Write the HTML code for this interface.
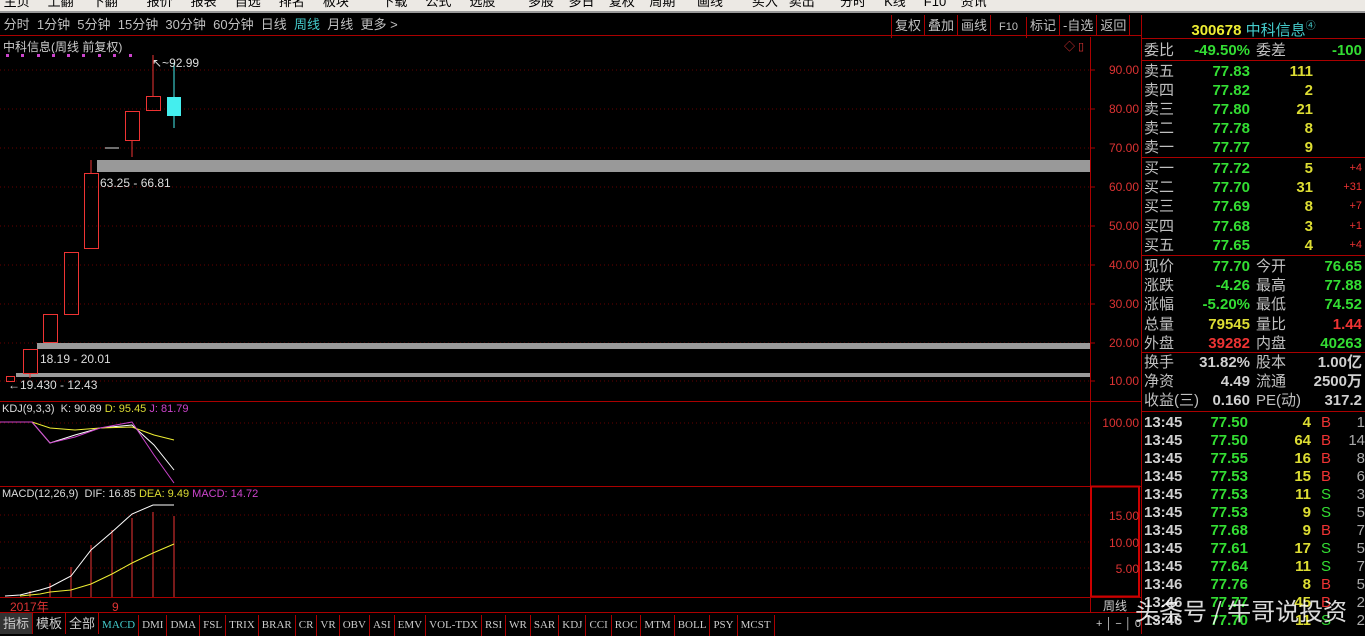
<!DOCTYPE html>
<html><head><meta charset="utf-8"><style>
*{margin:0;padding:0;box-sizing:border-box}
body{width:1365px;height:634px;background:#000;overflow:hidden;position:relative;font-family:"Liberation Sans","Noto Sans CJK SC",sans-serif;color:#c0c0c0}
.a{position:absolute;white-space:nowrap}
.r{position:absolute;white-space:nowrap;text-align:right}
.rp{position:absolute;left:0;top:0;width:1365px;height:634px;font-size:15px;font-weight:bold;line-height:19px}
.lb{font-weight:normal;color:#c0c0c0}
.g{color:#33dd33}.y{color:#dddd33}.rd{color:#ee3333}.w{color:#d0d0d0}
.tabs span{display:inline-block;border-right:1px solid #a00;padding:0 3px;height:21px;line-height:21px}
</style></head><body>
<div class="a" style="left:0;top:0;width:1365px;height:13px;background:#ece9e4;border-bottom:2px solid #999;font-size:13px;color:#000;line-height:4px;overflow:hidden">&nbsp;主页 &nbsp;&nbsp;&nbsp;&nbsp;上翻&nbsp;&nbsp;&nbsp;&nbsp;&nbsp;下翻&nbsp;&nbsp;&nbsp;&nbsp;&nbsp;&nbsp;&nbsp; 报价&nbsp;&nbsp;&nbsp;&nbsp; 报表&nbsp;&nbsp;&nbsp;&nbsp; 自选&nbsp;&nbsp;&nbsp;&nbsp; 排名&nbsp;&nbsp;&nbsp;&nbsp; 板块&nbsp;&nbsp;&nbsp;&nbsp;&nbsp;&nbsp;&nbsp;&nbsp; 下载&nbsp;&nbsp;&nbsp;&nbsp; 公式&nbsp;&nbsp;&nbsp;&nbsp; 选股&nbsp;&nbsp;&nbsp;&nbsp;&nbsp;&nbsp;&nbsp;&nbsp; 多股&nbsp;&nbsp;&nbsp; 多日&nbsp;&nbsp;&nbsp; 复权&nbsp;&nbsp;&nbsp; 周期&nbsp;&nbsp;&nbsp;&nbsp;&nbsp; 画线&nbsp;&nbsp;&nbsp;&nbsp;&nbsp;&nbsp;&nbsp; 买入&nbsp;&nbsp; 卖出&nbsp;&nbsp;&nbsp;&nbsp;&nbsp;&nbsp; 分时&nbsp;&nbsp;&nbsp;&nbsp; K线&nbsp;&nbsp;&nbsp;&nbsp; F10&nbsp;&nbsp;&nbsp; 资讯</div>
<div class="a" style="left:0;top:15px;width:1141px;height:21px;border-bottom:1px solid #a00;font-size:13px;line-height:20px;color:#c0c0c0">&nbsp;分时&nbsp; 1分钟&nbsp; 5分钟&nbsp; 15分钟&nbsp; 30分钟&nbsp; 60分钟&nbsp; 日线&nbsp; <span style="color:#4cc">周线</span>&nbsp; 月线&nbsp; 更多 &gt;</div>
<div class="a tabs" style="left:891px;top:15px;font-size:13px;color:#c0c0c0;border-left:1px solid #a00"><span>复权</span><span>叠加</span><span>画线</span><span style="font-size:11px;padding:0 8px">F10</span><span>标记</span><span>-自选</span><span>返回</span></div>
<div class="a" style="left:1141px;top:15px;width:224px;height:24px;border-left:1px solid #a00;border-bottom:1px solid #a00;text-align:center;font-size:15px;line-height:24px"><b style="color:#ee3">300678</b> <span style="color:#4cc">中科信息</span><sup style="color:#4cc;font-size:10px">④</sup></div>
<div class="a" style="left:1141px;top:15px;width:1px;height:619px;background:#a00"></div>
<svg class="a" style="left:0;top:0" width="1141" height="634">
<line x1="1090.5" y1="37" x2="1090.5" y2="612" stroke="#a00"/>
<line x1="0" y1="401.5" x2="1141" y2="401.5" stroke="#a00"/>
<line x1="0" y1="486.5" x2="1141" y2="486.5" stroke="#a00"/>
<rect x="1091" y="486.5" width="48" height="110" fill="none" stroke="#c00" stroke-width="2"/>
<line x1="0" y1="597.5" x2="1141" y2="597.5" stroke="#a00"/>
<line x1="0" y1="612.5" x2="1141" y2="612.5" stroke="#a00"/>
<g stroke="#600" stroke-dasharray="1,3">
<line x1="0" y1="70" x2="1090" y2="70"/><line x1="0" y1="109" x2="1090" y2="109"/><line x1="0" y1="148" x2="1090" y2="148"/><line x1="0" y1="187" x2="1090" y2="187"/><line x1="0" y1="226" x2="1090" y2="226"/><line x1="0" y1="265" x2="1090" y2="265"/><line x1="0" y1="304" x2="1090" y2="304"/><line x1="0" y1="343" x2="1090" y2="343"/><line x1="0" y1="381" x2="1090" y2="381"/>
<line x1="0" y1="423" x2="1090" y2="423"/><line x1="0" y1="515" x2="1090" y2="515"/><line x1="0" y1="542" x2="1090" y2="542"/><line x1="0" y1="568" x2="1090" y2="568"/>
</g>
<rect x="97" y="160" width="993" height="12" fill="#999"/>
<rect x="37" y="343" width="1053" height="6" fill="#999"/>
<rect x="16" y="373" width="1074" height="4" fill="#999"/>
<g fill="none" stroke="#e33">
<rect x="6.5" y="376.5" width="8" height="5"/>
<rect x="23.5" y="349.5" width="14" height="24"/><line x1="30" y1="373" x2="30" y2="378"/>
<rect x="43.5" y="314.5" width="14" height="28"/>
<rect x="64.5" y="252.5" width="14" height="62"/>
<rect x="84.5" y="173.5" width="14" height="75"/><line x1="91" y1="160" x2="91" y2="173"/>
<line x1="105" y1="148" x2="119" y2="148" stroke="#ddd"/>
<rect x="125.5" y="111.5" width="14" height="29"/><line x1="132" y1="140" x2="132" y2="157"/>
<rect x="146.5" y="96.5" width="14" height="14"/><line x1="153" y1="55" x2="153" y2="96"/>
</g>
<line x1="174" y1="63" x2="174" y2="128" stroke="#4ee"/>
<rect x="167" y="97" width="14" height="19" fill="#4ee"/>
<g fill="#c4c"><rect x="6" y="54" width="3" height="3"/><rect x="21" y="54" width="3" height="3"/><rect x="37" y="54" width="3" height="3"/><rect x="52" y="54" width="3" height="3"/><rect x="67" y="54" width="3" height="3"/><rect x="82" y="54" width="3" height="3"/><rect x="98" y="54" width="3" height="3"/><rect x="113" y="54" width="3" height="3"/><rect x="129" y="54" width="3" height="3"/></g>
<g stroke="#a00"><line x1="1090" y1="70" x2="1095" y2="70"/><line x1="1090" y1="109" x2="1095" y2="109"/><line x1="1090" y1="148" x2="1095" y2="148"/><line x1="1090" y1="187" x2="1095" y2="187"/><line x1="1090" y1="226" x2="1095" y2="226"/><line x1="1090" y1="265" x2="1095" y2="265"/><line x1="1090" y1="304" x2="1095" y2="304"/><line x1="1090" y1="343" x2="1095" y2="343"/><line x1="1090" y1="381" x2="1095" y2="381"/></g>
<g font-size="12" fill="#d33" text-anchor="end" font-family="Liberation Sans"><text x="1139" y="74">90.00</text><text x="1139" y="113">80.00</text><text x="1139" y="152">70.00</text><text x="1139" y="191">60.00</text><text x="1139" y="230">50.00</text><text x="1139" y="269">40.00</text><text x="1139" y="308">30.00</text><text x="1139" y="347">20.00</text><text x="1139" y="385">10.00</text><text x="1139" y="427">100.00</text><text x="1139" y="520">15.00</text><text x="1139" y="547">10.00</text><text x="1139" y="573">5.00</text></g>
<g font-size="12" fill="#ddd" font-family="Liberation Sans"><text x="100" y="187">63.25 - 66.81</text><text x="40" y="363">18.19 - 20.01</text><text x="8" y="389">←19.430 - 12.43</text><text x="152" y="67">↖~92.99</text></g>
<text x="1064" y="50" font-size="11" fill="#d33">◇ ▯</text>
<polyline points="0,422 32,422 50,443 75,435 100,428 132,425 154,445 174,470" fill="none" stroke="#fff"/>
<polyline points="0,422 32,422 50,428 75,430 100,428 132,427 154,435 174,440" fill="none" stroke="#ee3"/>
<polyline points="0,422 32,422 50,443 75,437 100,428 132,422 154,455 174,483" fill="none" stroke="#c4c"/>
<g stroke="#e33"><line x1="30" y1="591" x2="30" y2="597"/><line x1="50" y1="583" x2="50" y2="597"/><line x1="71" y1="567" x2="71" y2="597"/><line x1="91" y1="545" x2="91" y2="597"/><line x1="112" y1="530" x2="112" y2="597"/><line x1="132" y1="518" x2="132" y2="597"/><line x1="153" y1="512" x2="153" y2="597"/><line x1="174" y1="516" x2="174" y2="597"/></g>
<polyline points="5,596 20,595 40,590 50,587 71,576 91,550 112,532 132,514 153,505 174,505" fill="none" stroke="#fff"/>
<polyline points="20,596 40,594 50,592 71,590 91,584 112,574 132,563 153,553 174,544" fill="none" stroke="#ee3"/>
<text x="1103" y="610" font-size="12" fill="#ccc" font-family="Liberation Sans,Noto Sans CJK SC">周线</text>
<text x="1096" y="627" font-size="11" fill="#ccc">+ │ − │ 0</text>
</svg>
<div class="a" style="left:3px;top:38px;font-size:12px;color:#ccc">中科信息(周线 前复权)</div>
<div class="a" style="left:2px;top:403px;font-size:11px;color:#ddd">KDJ(9,3,3)&nbsp; K: 90.89 <span class="y">D: 95.45</span> <span style="color:#c4c">J: 81.79</span></div>
<div class="a" style="left:2px;top:488px;font-size:11px;color:#ddd">MACD(12,26,9)&nbsp; DIF: 16.85 <span class="y">DEA: 9.49</span> <span style="color:#c4c">MACD: 14.72</span></div>
<div class="a" style="left:10px;top:598px;font-size:12px;color:#d33">2017年&nbsp;&nbsp;&nbsp;&nbsp;&nbsp;&nbsp;&nbsp;&nbsp;&nbsp;&nbsp;&nbsp;&nbsp;&nbsp;&nbsp;&nbsp;&nbsp;&nbsp;&nbsp; 9</div>
<div class="a tabs" style="left:0;top:613px;font-size:11px;color:#ccc;font-family:'Liberation Serif','Noto Sans CJK SC',serif"><span style="font-size:13px;background:#333">指标</span><span style="font-size:13px">模板</span><span style="font-size:13px">全部</span><span style="color:#4cc">MACD</span><span>DMI</span><span>DMA</span><span>FSL</span><span>TRIX</span><span>BRAR</span><span>CR</span><span>VR</span><span>OBV</span><span>ASI</span><span>EMV</span><span>VOL-TDX</span><span>RSI</span><span>WR</span><span>SAR</span><span>KDJ</span><span>CCI</span><span>ROC</span><span>MTM</span><span>BOLL</span><span>PSY</span><span>MCST</span></div>
<div class="a" style="left:1142px;top:60px;width:223px;height:1px;background:#a00"></div>
<div class="a" style="left:1142px;top:157px;width:223px;height:1px;background:#a00"></div>
<div class="a" style="left:1142px;top:255px;width:223px;height:1px;background:#a00"></div>
<div class="a" style="left:1142px;top:352px;width:223px;height:1px;background:#a00"></div>
<div class="a" style="left:1142px;top:411px;width:223px;height:1px;background:#a00"></div>
<div class="rp">
<div class="a lb" style="left:1144px;top:41px">委比</div><div class="r g" style="right:115px;top:41px">-49.50%</div><div class="a lb" style="left:1256px;top:41px">委差</div><div class="r g" style="right:3px;top:41px">-100</div>
<div class="a lb" style="left:1144px;top:62px">卖五<br>卖四<br>卖三<br>卖二<br>卖一</div>
<div class="r g" style="right:115px;top:62px">77.83<br>77.82<br>77.80<br>77.78<br>77.77</div>
<div class="r y" style="right:52px;top:62px">111<br>2<br>21<br>8<br>9</div>
<div class="a lb" style="left:1144px;top:159px;line-height:19.2px">买一<br>买二<br>买三<br>买四<br>买五</div>
<div class="r g" style="right:115px;top:159px;line-height:19.2px">77.72<br>77.70<br>77.69<br>77.68<br>77.65</div>
<div class="r y" style="right:52px;top:159px;line-height:19.2px">5<br>31<br>8<br>3<br>4</div>
<div class="r rd" style="right:3px;top:159px;line-height:19.2px;font-size:11px;font-weight:normal">+4<br>+31<br>+7<br>+1<br>+4</div>
<div class="a lb" style="left:1144px;top:257px;line-height:19.2px">现价<br>涨跌<br>涨幅<br>总量<br>外盘</div>
<div class="r" style="right:115px;top:257px;line-height:19.2px"><span class="g">77.70</span><br><span class="g">-4.26</span><br><span class="g">-5.20%</span><br><span class="y">79545</span><br><span class="rd">39282</span></div>
<div class="a lb" style="left:1256px;top:257px;line-height:19.2px">今开<br>最高<br>最低<br>量比<br>内盘</div>
<div class="r" style="right:3px;top:257px;line-height:19.2px"><span class="g">76.65</span><br><span class="g">77.88</span><br><span class="g">74.52</span><br><span class="rd">1.44</span><br><span class="g">40263</span></div>
<div class="a lb" style="left:1144px;top:353px;line-height:19px">换手<br>净资<br>收益(三)</div>
<div class="r w" style="right:115px;top:353px;line-height:19px">31.82%<br>4.49<br>0.160</div>
<div class="a lb" style="left:1256px;top:353px;line-height:19px">股本<br>流通<br>PE(动)</div>
<div class="r w" style="right:3px;top:353px;line-height:19px">1.00亿<br>2500万<br>317.2</div>
<div class="a w" style="left:1144px;top:414px;line-height:18px">13:45<br>13:45<br>13:45<br>13:45<br>13:45<br>13:45<br>13:45<br>13:45<br>13:45<br>13:46<br>13:46<br>13:46</div>
<div class="r g" style="right:117px;top:414px;line-height:18px">77.50<br>77.50<br>77.55<br>77.53<br>77.53<br>77.53<br>77.68<br>77.61<br>77.64<br>77.76<br>77.77<br>77.70</div>
<div class="r y" style="right:54px;top:414px;line-height:18px">4<br>64<br>16<br>15<br>11<br>9<br>9<br>17<br>11<br>8<br>45<br>11</div>
<div class="a" style="left:1321px;top:414px;line-height:18px;font-weight:normal"><span class="rd">B</span><br><span class="rd">B</span><br><span class="rd">B</span><br><span class="rd">B</span><br><span class="g">S</span><br><span class="g">S</span><br><span class="rd">B</span><br><span class="g">S</span><br><span class="g">S</span><br><span class="rd">B</span><br><span class="rd">B</span><br><span class="g">S</span></div>
<div class="r" style="right:0;top:414px;line-height:18px;color:#aaa;font-weight:normal">1<br>14<br>8<br>6<br>3<br>5<br>7<br>5<br>7<br>5<br>2<br>2</div>
</div>
<div class="a" style="left:1135px;top:592px;font-size:24px;color:rgba(255,255,255,0.85);font-family:'Noto Sans CJK SC',sans-serif">头条号 / 牛哥说投资</div>
</body></html>
